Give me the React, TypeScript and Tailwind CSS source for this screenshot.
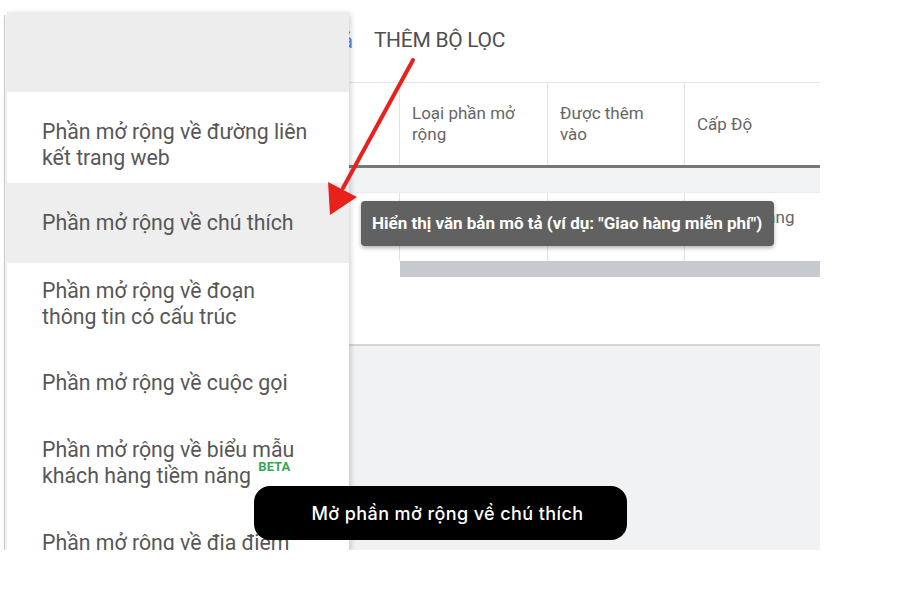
import type { FC, ReactNode } from 'react';

type MenuItem = {
  lines: ReactNode[];
  box: string;
  active?: boolean;
};

const menuItems: MenuItem[] = [
  {
    lines: ['Phần mở rộng về đường liên', 'kết trang web'],
    box: 'h-[91px] pt-[14px]',
  },
  { lines: ['Phần mở rộng về chú thích'], box: 'h-[80px]', active: true },
  {
    lines: ['Phần mở rộng về đoạn', 'thông tin có cấu trúc'],
    box: 'h-[82px]',
  },
  { lines: ['Phần mở rộng về cuộc gọi'], box: 'h-[76px]' },
  {
    lines: [
      'Phần mở rộng về biểu mẫu',
      <>
        khách hàng tiềm năng{' '}
        <sup className="ml-[2px] text-[13px] font-bold text-[#34a853] align-[6px]">
          BETA
        </sup>
      </>,
    ],
    box: 'h-[84px]',
  },
  { lines: ['Phần mở rộng về địa điểm'], box: 'h-[76px]' },
];

const ExtensionMenu: FC = () => (
  <div className="relative z-10 mt-[12px] w-[342px] shrink-0 bg-white shadow-[1px_2px_6px_rgba(0,0,0,0.22)] flex flex-col">
    <div className="h-[80px] shrink-0 bg-[#ededed]" />
    {menuItems.map((item, i) => (
      <div
        key={i}
        className={`${item.box} shrink-0 flex flex-col justify-center pl-[35px] text-[21.3px] leading-[26px] text-[#575757] ${
          item.active ? 'bg-[#eeeeee]' : 'bg-white'
        }`}
      >
        {item.lines.map((l, j) => (
          <p key={j} className="whitespace-nowrap">
            {l}
          </p>
        ))}
      </div>
    ))}
  </div>
);

const colDivider = 'border-r border-[#e3e3e3]';

const TablePane: FC = () => (
  <div className="flex-1 flex flex-col min-w-0">
    {/* filter bar */}
    <div className="h-[82px] shrink-0 flex items-center">
      <span className="-ml-[7px] text-[20px] text-[#4d86e8]">ả</span>
      <span className="ml-[21px] text-[21px] text-[#4f4f4f] tracking-[-0.3px]">
        THÊM BỘ LỌC
      </span>
    </div>

    {/* header */}
    <div className="h-[86px] shrink-0 flex border-t border-[#e6e6e6] border-b-[3px] border-b-[#777777] text-[17px] leading-[21px] text-[#666666]">
      <div className={`w-[51px] ${colDivider}`} />
      <div className={`w-[148px] ${colDivider} flex items-center px-[12px]`}>
        <p>
          Loại phần mở
          <br />
          rộng
        </p>
      </div>
      <div className={`w-[137px] ${colDivider} flex items-center px-[12px]`}>
        <p>
          Được thêm
          <br />
          vào
        </p>
      </div>
      <div className="flex-1 flex items-center px-[12px]">
        <p>Cấp Độ</p>
      </div>
    </div>

    <div className="h-[24px] shrink-0 bg-[#f1f3f4]" />

    {/* data row */}
    <div className="h-[69px] shrink-0 flex border-t border-[#ececec] text-[17px] leading-[21px] text-[#666666]">
      <div className={`w-[51px] ${colDivider}`} />
      <div className={`w-[148px] ${colDivider}`} />
      <div className={`w-[137px] ${colDivider}`} />
      <div className="flex-1 pl-[12px] pt-[14px]">
        <p className="w-[104px]">Nhóm quảng cáo</p>
      </div>
    </div>

    <div className="h-[16px] shrink-0 flex">
      <div className="w-[51px] bg-white" />
      <div className="flex-1 bg-[#c6c9cd]" />
    </div>

    <div className="h-[67px] shrink-0 bg-white" />

    <div className="flex-1 bg-[#f1f2f4] border-t-2 border-[#d3d5d8]" />
  </div>
);

const Arrow: FC = () => (
  <svg
    className="absolute left-0 top-0 z-30 pointer-events-none"
    width="820"
    height="550"
    viewBox="0 0 820 550"
  >
    <line
      x1="413"
      y1="60"
      x2="343"
      y2="188"
      stroke="#e8211d"
      strokeWidth="4"
      strokeLinecap="round"
    />
    <polygon points="330,215 357,197 328,182" fill="#e8211d" />
  </svg>
);

export default function App() {
  return (
    <div className="relative w-[900px] h-[600px] bg-white overflow-hidden font-['Roboto','Noto_Sans',sans-serif]">
      <div className="relative w-[820px] h-[550px] overflow-hidden flex">
        <div className="w-[7px] shrink-0 pt-[15px] pl-[4px]">
          <div className="w-px h-full bg-[#cfcfcf]" />
        </div>
        <ExtensionMenu />
        <TablePane />

        {/* tooltip */}
        <div className="absolute left-[361px] top-[201px] z-20 w-[413px] h-[45px] rounded-[4px] bg-[#616161] shadow-[0_2px_4px_rgba(0,0,0,0.3)] flex items-center pl-[11px]">
          <span className="text-[17px] font-bold text-white whitespace-nowrap">
            Hiển thị văn bản mô tả (ví dụ: "Giao hàng miễn phí")
          </span>
        </div>

        {/* caption pill */}
        <div className="absolute left-[254px] top-[486px] z-20 w-[373px] h-[54px] rounded-[16px] bg-black flex items-center justify-center pl-[14px]">
          <span className="font-['Inter',sans-serif] text-[18px] font-medium text-white tracking-[0.4px]">
            Mở phần mở rộng về chú thích
          </span>
        </div>

        <Arrow />
      </div>
    </div>
  );
}
